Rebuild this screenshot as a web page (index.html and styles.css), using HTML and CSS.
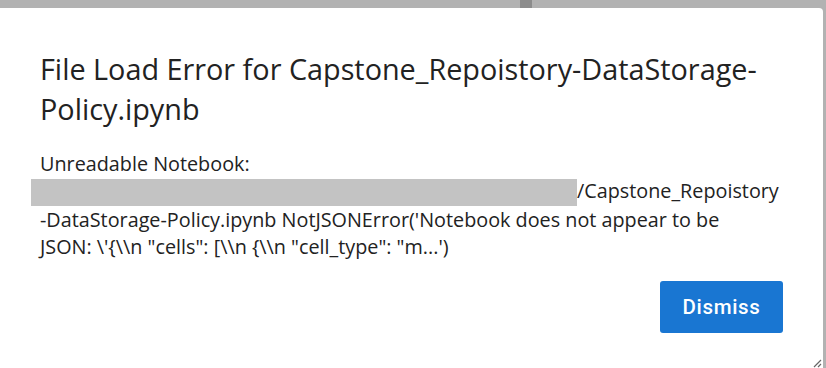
FILE: index.html
```html
<!DOCTYPE html>
<html>
<head>
<meta charset="utf-8">
<link rel="stylesheet" href="styles.css">
</head>
<body>
<div class="backdrop">
  <div class="topstrip"><div class="divider"></div></div>
  <div class="dialog">
    <h1 class="title">File Load Error for Capstone_Repoistory-DataStorage-Policy.ipynb</h1>
    <div class="body">
      <div>Unreadable Notebook:</div>
      <div><span class="redact"></span>/Capstone_Repoistory<br>-DataStorage-Policy.ipynb NotJSONError('Notebook does not appear to be<br>JSON: \'{\\n "cells": [\\n {\\n "cell_type": "m...')</div>
    </div>
    <div class="footer"><button class="btn">Dismiss</button></div>
    <svg class="grip" width="12" height="12" viewBox="0 0 12 12"><path d="M11 4 L4 11 M11 8 L8 11" stroke="#666" stroke-width="1.2"/></svg>
  </div>
</div>
</body>
</html>
```
FILE: styles.css
```css
html, body { margin: 0; padding: 0; }
body { background: #b2b2b2; width: 826px; height: 368px; overflow: hidden; font-family: "Open Sans", "Noto Sans", sans-serif; }
.backdrop { display: flex; flex-direction: column; height: 368px; }
.topstrip { height: 8px; display: flex; flex: none; }
.divider { margin-left: 520px; width: 12px; background: #8c8c8c; }
.dialog { position: relative; flex: 1; width: 823px; background: #fff; border-radius: 0 4px 0 0; box-sizing: border-box; padding: 41px 40px 0 40px; }
.title { margin: 0; font-weight: 400; font-size: 28.8px; line-height: 40px; color: #222; width: 745px; }
.body { margin-top: 21px; font-size: 19.8px; line-height: 27px; color: #222; width: 770px; white-space: nowrap; }
.redact { display: inline-block; width: 546px; height: 27px; background: #c3c3c3; vertical-align: -8px; margin-left: -9px; }
.footer { display: flex; justify-content: flex-end; margin-top: 21px; }
.btn { width: 123px; height: 52px; background: #1976d2; color: #fff; border: none; border-radius: 3px; font-family: "Roboto", "Liberation Sans", sans-serif; font-size: 20.5px; font-weight: 500; letter-spacing: 0.7px; }
.grip { position: absolute; right: 1px; bottom: 0; }
```
